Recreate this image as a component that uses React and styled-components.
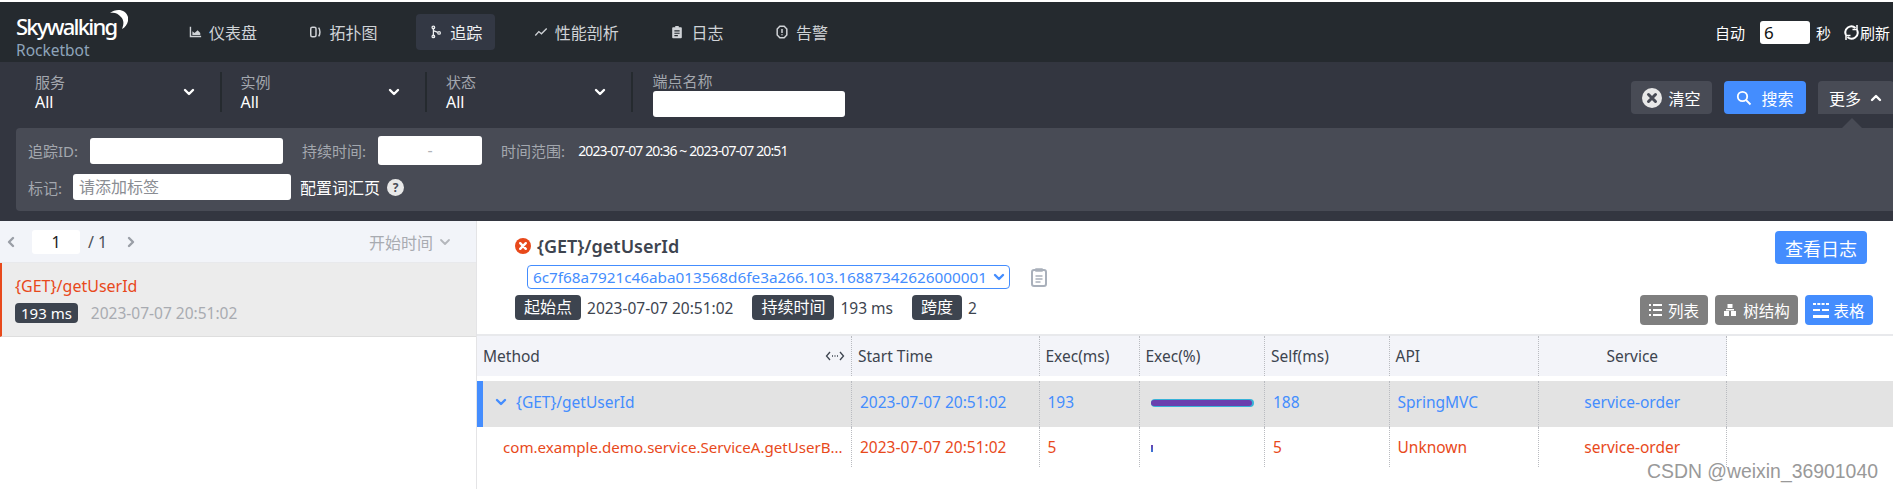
import React from 'react';
import styled, { createGlobalStyle } from 'styled-components';

const GlobalStyle = createGlobalStyle`
  html, body { margin: 0; padding: 0; background: #fff; overflow: hidden; }
  body { font-family: "Noto Sans", "Noto Sans CJK SC", sans-serif; font-size: 14px; color: #3d444f; }
  * { box-sizing: border-box; }
`;

const Page = styled.div`
  width: 1893px;
  height: 489px;
  padding-top: 2px;
  position: relative;
  overflow: hidden;
`;

// top navigation
const Nav = styled.header`
  height: 60px;
  background: #252a2f;
  display: flex;
  align-items: center;
  color: #d0d3d7;
`;

const Logo = styled.div`
  width: 175px;
  padding: 6px 0 0 16px;
  flex-shrink: 0;
  position: relative;
`;

const LogoName = styled.div`
  font-size: 22px;
  line-height: 27px;
  font-weight: 500;
  color: #fff;
  letter-spacing: -1.76px;
`;

const LogoSub = styled.div`
  margin-top: 2px;
  font-size: 15.5px;
  line-height: 16px;
  color: #8ea4ba;
`;

const Moon = styled.svg`
  position: absolute;
  left: 110px;
  top: 2px;
`;

const NavItems = styled.nav`
  display: flex;
  gap: 25.6px;
`;

const NavItem = styled.a`
  display: flex;
  align-items: center;
  gap: 7px;
  height: 36px;
  padding: 0 13px;
  border-radius: 4px;
  font-size: 16px;
  color: ${p => (p.$active ? '#eef0f2' : '#d0d3d7')};
  background: ${p => (p.$active ? '#333844' : 'transparent')};
`;

const AutoRefresh = styled.div`
  margin-left: auto;
  display: flex;
  align-items: center;
  color: #fff;
  font-size: 15px;
  padding-right: 3px;
`;

const AutoInput = styled.div`
  width: 50px;
  height: 23px;
  margin: 0 6px 0 15px;
  background: #fff;
  border-radius: 3px;
  color: #111;
  font-size: 17px;
  line-height: 23px;
  padding-left: 4px;
`;

const RefreshLabel = styled.span`
  display: flex;
  align-items: center;
  margin-left: 12px;
`;

// filter area
const FilterArea = styled.section`
  height: 159px;
  background: #333640;
  padding-top: 10px;
`;

const FilterRow = styled.div`
  height: 40px;
  padding-left: 16px;
  display: flex;
  position: relative;
`;

const FilterItem = styled.div`
  width: 205.5px;
  height: 40px;
  padding: 0 24px 0 19px;
  border-right: 2px solid #252a2f;
  display: flex;
  align-items: center;
  justify-content: space-between;
`;

const EndpointItem = styled.div`
  padding-left: 20px;
`;

const FieldLabel = styled.div`
  font-size: 15px;
  line-height: 19px;
  color: #a3a7ae;
`;

const FieldValue = styled.div`
  font-size: 16px;
  line-height: 20px;
  color: #fff;
`;

const EndpointInput = styled.div`
  width: 192px;
  height: 26px;
  background: #fff;
  border-radius: 3px;
`;

const Actions = styled.div`
  margin-left: auto;
  margin-top: 9px;
  display: flex;
  gap: 12px;
  margin-right: -1px;
`;

const ActionButton = styled.button`
  height: 33px;
  width: ${p => p.$width}px;
  border: 0;
  border-radius: 4px 4px ${p => (p.$open ? '0 0' : '4px 4px')};
  background: ${p => (p.$primary ? '#448dfe' : '#484b55')};
  color: #fff;
  font: inherit;
  font-size: 16px;
  display: flex;
  align-items: center;
  justify-content: center;
  gap: ${p => p.$gap || 6}px;
  position: relative;
  padding: 0;
`;

const Caret = styled.span`
  position: absolute;
  left: 24px;
  bottom: -14px;
  width: 0;
  height: 0;
  border-left: 10px solid transparent;
  border-right: 10px solid transparent;
  border-bottom: 10px solid #484b55;
`;

const MorePanel = styled.div`
  margin: 16px 0 0 16px;
  height: 83px;
  background: #484b55;
  border-radius: 4px 0 0 4px;
  padding: 8px 0 0 12px;
`;

const PanelRow = styled.div`
  display: flex;
  align-items: center;
  height: ${p => p.$height}px;
  margin-bottom: ${p => p.$gap || 0}px;
`;

const PanelLabel = styled.span`
  color: #a3a7ae;
  font-size: 15px;
  margin-left: ${p => p.$left || 0}px;
  margin-right: ${p => p.$right || 0}px;
`;

const PanelInput = styled.div`
  width: ${p => p.$width}px;
  height: ${p => p.$height || 26}px;
  background: #fff;
  border-radius: 3px;
  color: ${p => (p.$muted ? '#8a8d93' : '#b0b3b8')};
  font-size: 16px;
  line-height: ${p => p.$height || 26}px;
  padding: 0 6px;
  text-align: ${p => (p.$center ? 'center' : 'left')};
`;

const PanelText = styled.span`
  color: #fff;
  font-size: 14px;
  letter-spacing: -0.88px;
`;

const ConfigLink = styled.span`
  color: #fff;
  font-size: 16px;
  margin: 0 7px 0 9px;
  display: flex;
`;

// lower area
const Content = styled.main`
  display: flex;
  height: 268px;
`;

const Sidebar = styled.aside`
  width: 477px;
  flex-shrink: 0;
  border-right: 1px solid #e4e4e6;
`;

const Pager = styled.div`
  height: 42px;
  background: #f2f4f9;
  border-bottom: 1px solid #e8e9ec;
  display: flex;
  align-items: center;
  padding: 0 24px 0 4px;
  color: #4a4f57;
  font-size: 16px;
`;

const PageInput = styled.div`
  width: 48px;
  height: 24px;
  margin: 0 8px 0 14px;
  background: #fff;
  border-radius: 3px;
  color: #222;
  text-align: center;
  line-height: 24px;
  font-size: 16px;
`;

const PageTotal = styled.span`
  margin-right: 17px;
`;

const SortLabel = styled.span`
  margin-left: auto;
  color: #a8abb1;
  font-size: 16px;
  display: flex;
  align-items: center;
  gap: 5px;
`;

const TraceItem = styled.div`
  height: 74px;
  background: #ececec;
  border-left: 2px solid #e8491b;
  border-bottom: 1px solid #dedede;
  padding: 9px 0 0 13px;
`;

const TraceTitle = styled.div`
  color: #e8491b;
  font-size: 16px;
  line-height: 28px;
`;

const TraceMeta = styled.div`
  display: flex;
  align-items: center;
  gap: 13px;
  margin-top: 2px;
`;

const DarkTag = styled.span`
  display: inline-block;
  background: #3d444f;
  color: #fff;
  border-radius: 4px;
  font-size: ${p => p.$size || 15}px;
  line-height: ${p => p.$height || 20}px;
  padding: 0 ${p => p.$pad || 6}px;
`;

const TraceDate = styled.span`
  color: #a8abb1;
  font-size: 15.5px;
`;

const Detail = styled.div`
  flex: 1;
  min-width: 0;
  position: relative;
`;

const DetailHead = styled.div`
  height: 115px;
  border-bottom: 2px solid #e8e9ec;
  padding: 10px 20px 0 38px;
  position: relative;
`;

const TitleRow = styled.div`
  display: flex;
  align-items: center;
  gap: 6px;
  height: 30px;
  font-size: 18px;
  font-weight: 600;
  color: #3d444f;
`;

const SelectRow = styled.div`
  display: flex;
  align-items: center;
  margin: 4px 0 6px 12px;
  height: 24px;
`;

const TraceSelect = styled.div`
  width: 483px;
  height: 24px;
  border: 1px solid #448dfe;
  border-radius: 4px;
  color: #448dfe;
  display: flex;
  align-items: center;
  justify-content: space-between;
  padding: 0 3px 0 5px;
  font-size: 15.3px;
  white-space: nowrap;
`;

const CopyIcon = styled.svg`
  margin-left: 21px;
`;

const MetaRow = styled.div`
  display: flex;
  align-items: center;
  height: 25px;
`;

const MetaValue = styled.span`
  margin: 0 ${p => p.$after}px 0 6px;
  font-size: 15.5px;
  color: #3d444f;
`;

const LogButton = styled.button`
  position: absolute;
  top: 10px;
  right: 26px;
  width: 92px;
  height: 33px;
  border: 0;
  border-radius: 4px;
  background: #448dfe;
  color: #fff;
  font: inherit;
  font-size: 18px;
`;

const ViewSwitch = styled.div`
  position: absolute;
  right: 20px;
  top: 74px;
  display: flex;
  gap: 7px;
`;

const ViewButton = styled.button`
  height: 30px;
  width: ${p => p.$width}px;
  border: 0;
  border-radius: 4px;
  background: ${p => (p.$active ? '#448dfe' : '#7f7f7f')};
  color: #fff;
  font: inherit;
  font-size: 15.5px;
  display: flex;
  align-items: center;
  justify-content: center;
  gap: ${p => p.$gap}px;
  padding: 0;
`;

const columns = [
  { key: 'method', width: 375 },
  { key: 'start', width: 187.5 },
  { key: 'exec', width: 100 },
  { key: 'pct', width: 125.5 },
  { key: 'self', width: 124.5 },
  { key: 'api', width: 149.5 },
  { key: 'service', width: 187.5, center: true },
];

const HeadRow = styled.div`
  display: flex;
  height: 40px;
  margin-bottom: 5px;
`;

const HeadCell = styled.div`
  width: ${p => p.$width}px;
  background: #f3f4f9;
  border-right: 1px dotted #b9bbc0;
  padding: 0 6px;
  display: flex;
  align-items: center;
  justify-content: ${p => (p.$center ? 'center' : 'space-between')};
  color: #3d444f;
  font-size: 15.5px;
`;

const DataRow = styled.div`
  display: flex;
  height: ${p => p.$height}px;
  background: ${p => (p.$selected ? '#e3e3e3' : '#fff')};
  color: ${p => (p.$error ? '#e8491b' : '#448dfe')};

  & > div {
    padding-bottom: ${p => (p.$selected ? 4 : 0)}px;
  }
`;

const DataCell = styled.div`
  width: ${p => p.$width}px;
  height: 100%;
  border-right: 1px dotted #b9bbc0;
  padding: 0 8px;
  display: flex;
  align-items: center;
  justify-content: ${p => (p.$center ? 'center' : 'flex-start')};
  font-size: 15.5px;
  min-width: 0;
`;

const BarCell = styled(DataCell)`
  padding-left: 11px;
`;

const MethodCell = styled(DataCell)`
  padding-left: ${p => p.$indent}px;
  padding-right: 2px;
  border-left: ${p => (p.$marked ? '6px solid #448dfe' : '0')};
  gap: 8px;
  font-size: ${p => p.$size || 15.5}px;
  white-space: nowrap;
`;

const Bar = styled.div`
  width: 103px;
  height: 8px;
  margin-top: 2px;
  border-radius: 4px;
  background: #38b2d8;
  padding: 1px 2px 1px 0;
`;

const BarFill = styled.div`
  height: 6px;
  border-radius: 3px;
  background: #6a3fae;
`;

const TinyBar = styled.div`
  width: 2px;
  height: 7px;
  margin-top: 2px;
  background: linear-gradient(#6a3fae, #3578d8);
`;

const Watermark = styled.div`
  position: absolute;
  left: 1647px;
  top: 458px;
  font-family: "Liberation Sans", sans-serif;
  font-size: 19.4px;
  line-height: 26px;
  color: #999;
  text-shadow: 0 0 1px #fff;
`;

const Chevron = ({ color = '#fff', dir = 'down', size = 14, w = 2.4 }) => (
  <svg width={size} height={size} viewBox="0 0 14 14" fill="none" stroke={color} strokeWidth={w} strokeLinecap="round" strokeLinejoin="round">
    {dir === 'down' && <path d="M3 5l4 4 4-4" />}
    {dir === 'up' && <path d="M3 9l4-4 4 4" />}
    {dir === 'left' && <path d="M9 3L5 7l4 4" />}
    {dir === 'right' && <path d="M5 3l4 4-4 4" />}
  </svg>
);

const CloseCircle = ({ size, bg, fg }) => (
  <svg width={size} height={size} viewBox="0 0 20 20">
    <circle cx="10" cy="10" r="10" fill={bg} />
    <path d="M6.5 6.5l7 7M13.5 6.5l-7 7" stroke={fg} strokeWidth="3" strokeLinecap="round" />
  </svg>
);

const icons = {
  chart: <path d="M2 2v12h13v-1.6H3.6V2zM5 11.5V7l2.5 2L11 6l3 3v2.5z" fill="currentColor" />,
  topo: <g fill="none" stroke="currentColor" strokeWidth="1.7"><rect x="2" y="2.5" width="6" height="11" rx="1.8" /><path d="M11 3c2 2.5 2 7.5 0 10" /></g>,
  trace: <g fill="none" stroke="currentColor" strokeWidth="1.4"><path d="M5 3v10M5 6.5l5 2" /><circle cx="5" cy="2.8" r="1.5" /><circle cx="5" cy="13" r="1.5" /><circle cx="11.5" cy="9" r="1.5" /></g>,
  trend: <path d="M1.5 12l4-4.5 3 2.5 6-6" fill="none" stroke="currentColor" strokeWidth="1.5" />,
  log: <path fillRule="evenodd" d="M6 1h4v1.5h2.5a1 1 0 0 1 1 1V14a1 1 0 0 1-1 1h-9a1 1 0 0 1-1-1V3.5a1 1 0 0 1 1-1H6zM5 6v1.3h6V6zM5 8.8v1.3h6V8.8zM5 11.5v1.3h4v-1.3z" fill="currentColor" />,
  alert: <g fill="none" stroke="currentColor" strokeWidth="1.7"><path d="M5.5 1.5h5l3 3v7l-3 3h-5l-3-3v-7z" /><path d="M8 4.5V9M8 10.5v1.3" /></g>,
};

const NavIcon = ({ name }) => (
  <svg width="14" height="14" viewBox="0 0 16 16">{icons[name]}</svg>
);

const navLinks = [
  { icon: 'chart', label: '仪表盘' },
  { icon: 'topo', label: '拓扑图' },
  { icon: 'trace', label: '追踪', active: true },
  { icon: 'trend', label: '性能剖析' },
  { icon: 'log', label: '日志' },
  { icon: 'alert', label: '告警' },
];

const App = () => (
  <Page>
    <GlobalStyle />
    <Nav>
      <Logo>
        <LogoName>Skywalking</LogoName>
        <LogoSub>Rocketbot</LogoSub>
        <Moon width="18" height="20" viewBox="0 0 18 20">
          <path d="M0 4C6 -1 16 0 18 8c1 5-2 10-6 12 2-5 2-9-1-12C8 4 4 3 0 4z" fill="#fff" />
        </Moon>
      </Logo>
      <NavItems>
        {navLinks.map(item => (
          <NavItem key={item.label} $active={item.active}>
            <NavIcon name={item.icon} />
            {item.label}
          </NavItem>
        ))}
      </NavItems>
      <AutoRefresh>
        自动
        <AutoInput>6</AutoInput>
        秒
        <RefreshLabel>
          <svg width="17" height="17" viewBox="0 0 17 17" fill="none" stroke="#fff" strokeWidth="2">
            <path d="M3 11a6 6 0 0 1 9.5-7M14 6a6 6 0 0 1-9.5 7" />
            <path d="M14 1v4.5H9.5M3 16v-4.500h4.500" strokeWidth="1.5" />
          </svg>
          刷新
        </RefreshLabel>
      </AutoRefresh>
    </Nav>

    <FilterArea>
      <FilterRow>
        {['服务', '实例', '状态'].map(label => (
          <FilterItem key={label}>
            <div>
              <FieldLabel>{label}</FieldLabel>
              <FieldValue>All</FieldValue>
            </div>
            <Chevron />
          </FilterItem>
        ))}
        <EndpointItem>
          <FieldLabel>端点名称</FieldLabel>
          <EndpointInput />
        </EndpointItem>
        <Actions>
          <ActionButton $width={81}>
            <CloseCircle size={20} bg="#e8e8e8" fg="#484b55" />
            清空
          </ActionButton>
          <ActionButton $width={82} $primary $gap={9}>
            <svg width="16" height="16" viewBox="0 0 16 16" fill="none" stroke="#fff" strokeWidth="1.8">
              <circle cx="6.5" cy="6.5" r="4.7" />
              <path d="M10 10l4.5 4.5" />
            </svg>
            搜索
          </ActionButton>
          <ActionButton $width={76} $open $gap={8}>
            更多
            <Chevron dir="up" />
            <Caret />
          </ActionButton>
        </Actions>
      </FilterRow>
      <MorePanel>
        <PanelRow $height={29} $gap={9}>
          <PanelLabel $right={12}>追踪ID:</PanelLabel>
          <PanelInput $width={193} />
          <PanelLabel $left={19} $right={12}>持续时间:</PanelLabel>
          <PanelInput $width={104} $height={29} $center>-</PanelInput>
          <PanelLabel $left={19} $right={13}>时间范围:</PanelLabel>
          <PanelText>2023-07-07 20:36 ~ 2023-07-07 20:51</PanelText>
        </PanelRow>
        <PanelRow $height={26}>
          <PanelLabel $right={11}>标记:</PanelLabel>
          <PanelInput $width={218} $muted>请添加标签</PanelInput>
          <ConfigLink>配置词汇页</ConfigLink>
          <svg width="17" height="17" viewBox="0 0 17 17">
            <circle cx="8.5" cy="8.5" r="8.5" fill="#e8e8e8" />
            <text x="8.5" y="13" textAnchor="middle" fontSize="12" fontWeight="700" fontFamily="Noto Sans, sans-serif" fill="#484b55">?</text>
          </svg>
        </PanelRow>
      </MorePanel>
    </FilterArea>

    <Content>
      <Sidebar>
        <Pager>
          <Chevron color="#9a9ea6" dir="left" />
          <PageInput>1</PageInput>
          <PageTotal>/ 1</PageTotal>
          <Chevron color="#9a9ea6" dir="right" />
          <SortLabel>
            开始时间
            <Chevron color="#b4b7bc" size={14} w={1.8} />
          </SortLabel>
        </Pager>
        <TraceItem>
          <TraceTitle>{'{GET}/getUserId'}</TraceTitle>
          <TraceMeta>
            <DarkTag $pad={6}>193 ms</DarkTag>
            <TraceDate>2023-07-07 20:51:02</TraceDate>
          </TraceMeta>
        </TraceItem>
      </Sidebar>

      <Detail>
        <DetailHead>
          <TitleRow>
            <CloseCircle size={16} bg="#e8491b" fg="#fff" />
            {'{GET}/getUserId'}
          </TitleRow>
          <SelectRow>
            <TraceSelect>
              6c7f68a7921c46aba013568d6fe3a266.103.16887342626000001
              <Chevron color="#448dfe" />
            </TraceSelect>
            <CopyIcon width="16" height="20" viewBox="0 0 16 20" fill="none" stroke="#a9b0bb" strokeWidth="2">
              <rect x="1" y="3" width="14" height="16" rx="2" />
              <path d="M5 2h6v2H5zM4.5 9h7M4.5 12h7M4.5 15h5" strokeWidth="1.4" />
            </CopyIcon>
          </SelectRow>
          <MetaRow>
            <DarkTag $size={16} $height={25} $pad={9}>起始点</DarkTag>
            <MetaValue $after={19}>2023-07-07 20:51:02</MetaValue>
            <DarkTag $size={16} $height={25} $pad={9}>持续时间</DarkTag>
            <MetaValue $after={19}>193 ms</MetaValue>
            <DarkTag $size={16} $height={25} $pad={9}>跨度</DarkTag>
            <MetaValue $after={0}>2</MetaValue>
          </MetaRow>
          <LogButton>查看日志</LogButton>
          <ViewSwitch>
            <ViewButton $width={68} $gap={6}>
              <svg width="13" height="14" viewBox="0 0 13 14" fill="#fff"><path d="M0 1h2v2H0zM4 1h9v2H4zM0 6h2v2H0zM4 6h9v2H4zM0 11h2v2H0zM4 11h9v2H4z" /></svg>
              列表
            </ViewButton>
            <ViewButton $width={83} $gap={6}>
              <svg width="14" height="14" viewBox="0 0 14 14" fill="#fff"><path d="M4.500 1h5v4h-5zM1 8h5v5H1zM8 8h5v5H8zM3 6h8v1.500H3z" /></svg>
              树结构
            </ViewButton>
            <ViewButton $width={68} $gap={4} $active>
              <svg width="16" height="17" viewBox="0 0 16 17" fill="#fff"><path d="M0 1h3v2H0zM4.300 1h3v2h-3zM8.600 1h3v2h-3zM13 1h3v2h-3zM0 7h7v2H0zM9 7h7v2H9zM0 13h16v3H0z" /></svg>
              表格
            </ViewButton>
          </ViewSwitch>
        </DetailHead>

        <HeadRow>
          <HeadCell $width={columns[0].width}>
            Method
            <svg width="20" height="12" viewBox="0 0 20 12" fill="none" stroke="#3d444f" strokeWidth="1.3">
              <path d="M5 2L1.5 6 5 10M15 2l3.5 4L15 10" />
              <path d="M7 6h1M9.500 6h1M12 6h1" />
            </svg>
          </HeadCell>
          <HeadCell $width={columns[1].width}>Start Time</HeadCell>
          <HeadCell $width={columns[2].width}>Exec(ms)</HeadCell>
          <HeadCell $width={columns[3].width}>Exec(%)</HeadCell>
          <HeadCell $width={columns[4].width}>Self(ms)</HeadCell>
          <HeadCell $width={columns[5].width}>API</HeadCell>
          <HeadCell $width={columns[6].width} $center>Service</HeadCell>
        </HeadRow>

        <DataRow $selected $height={46}>
          <MethodCell $width={columns[0].width} $indent={11} $marked>
            <Chevron color="#448dfe" />
            {'{GET}/getUserId'}
          </MethodCell>
          <DataCell $width={columns[1].width}>2023-07-07 20:51:02</DataCell>
          <DataCell $width={columns[2].width}>193</DataCell>
          <BarCell $width={columns[3].width}><Bar><BarFill /></Bar></BarCell>
          <DataCell $width={columns[4].width}>188</DataCell>
          <DataCell $width={columns[5].width}>SpringMVC</DataCell>
          <DataCell $width={columns[6].width} $center>service-order</DataCell>
        </DataRow>
        <DataRow $error $height={40}>
          <MethodCell $width={columns[0].width} $indent={26} $size={15.1}>
            com.example.demo.service.ServiceA.getUserB...
          </MethodCell>
          <DataCell $width={columns[1].width}>2023-07-07 20:51:02</DataCell>
          <DataCell $width={columns[2].width}>5</DataCell>
          <BarCell $width={columns[3].width}><TinyBar /></BarCell>
          <DataCell $width={columns[4].width}>5</DataCell>
          <DataCell $width={columns[5].width}>Unknown</DataCell>
          <DataCell $width={columns[6].width} $center>service-order</DataCell>
        </DataRow>
      </Detail>
    </Content>
    <Watermark>CSDN @weixin_36901040</Watermark>
  </Page>
);

export default App;
